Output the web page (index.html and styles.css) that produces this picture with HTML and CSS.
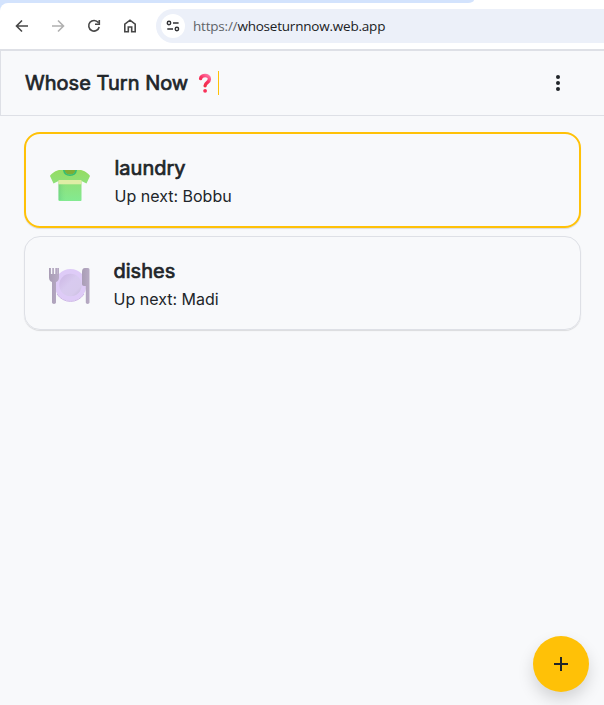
FILE: index.html
```html
<!DOCTYPE html>
<html lang="en">
<head>
<meta charset="utf-8">
<title>Whose Turn Now</title>
<link rel="stylesheet" href="styles.css">
</head>
<body>
<div class="window">
  <div class="tabstrip"><div class="tabstrip-fill"></div></div>
  <div class="toolbar">
    <svg class="nav" viewBox="0 0 16 16"><path d="M14 8H3M8 2.500 2.500 8 8 13.500"/></svg>
    <svg class="nav nav-off" viewBox="0 0 16 16"><path d="M2 8h11M8 2.500 13.500 8 8 13.500"/></svg>
    <svg class="nav" viewBox="0 0 16 16"><path d="M12.300 4.600A5.300 5.300 0 1 0 13.200 9M13.300 2v4.300H9"/></svg>
    <svg class="nav" viewBox="0 0 16 16"><path d="M2.800 13.700V6.200L8 2.200l5.200 4v7.500H9.700V9H6.300v4.700z"/></svg>
    <div class="omnibox">
      <span class="site-info"><svg viewBox="0 0 14 14"><circle cx="3" cy="4" r="1.700"/><path d="M7 4h5.600M1.300 10H7"/><circle cx="10.900" cy="10" r="1.700"/></svg></span>
      <span class="url"><span class="scheme">https://</span>whoseturnnow.web.app</span>
    </div>
  </div>
  <div class="page">
    <header class="appbar">
      <h1 class="title">Whose Turn Now</h1>
      <svg class="question" viewBox="0 0 14 20">
        <defs><linearGradient id="red" x1="1" y1="0" x2="0.400" y2="1"><stop offset="0" stop-color="#ff75a5"/><stop offset="0.550" stop-color="#f92f60"/><stop offset="1" stop-color="#ef3044"/></linearGradient></defs>
        <path d="M2.600 5.600C3 1.500 11.500 1.300 11.400 6.100c0 3.500-4.300 3.400-4.300 6.600" fill="none" stroke="url(#red)" stroke-width="3.400" stroke-linecap="round"/>
        <circle cx="7.100" cy="17.800" r="1.900" fill="#f83159"/>
      </svg>
      <span class="caret"></span>
      <svg class="more" viewBox="0 0 6 18"><circle cx="3" cy="3" r="2"/><circle cx="3" cy="9" r="2"/><circle cx="3" cy="15" r="2"/></svg>
    </header>
    <main class="list">
      <article class="card card-active">
        <svg class="emoji" viewBox="0 0 42 42">
          <defs>
            <linearGradient id="shirt" x1="0" y1="0" x2="0" y2="1"><stop offset="0" stop-color="#95dc62"/><stop offset="0.450" stop-color="#8ee17b"/><stop offset="1" stop-color="#83ea91"/></linearGradient>
            <linearGradient id="side" x1="0" y1="0" x2="1" y2="0"><stop offset="0" stop-color="#49b978" stop-opacity="0.350"/><stop offset="0.350" stop-color="#83e38c" stop-opacity="0"/></linearGradient>
          </defs>
          <path d="M14 5h14v5H14z" fill="#7fac35"/>
          <path d="M10 5h5c1 6 11 6 12 0h5c2 0 8.500 4 9 6L37.500 18.500l-5-2.500V35c0 .6-.4 1-1 1h-21c-.6 0-1-.4-1-1V16l-5 2.500L1 11C1.500 9 8 5 10 5z" fill="url(#shirt)"/>
          <path d="M9.500 19h23v16h-23z" fill="url(#side)"/>
          <path d="M9.500 15h23v4.300h-23z" fill="#dfeda5"/>
          <path d="M14.800 5c1 7 11.400 7 12.400 0" fill="none" stroke="#35bd73" stroke-width="1.700"/>
        </svg>
        <div class="text"><h2 class="name">laundry</h2><p class="next">Up next: Bobbu</p></div>
      </article>
      <article class="card">
        <svg class="emoji" viewBox="0 0 42 42">
          <defs>
            <linearGradient id="well" x1="0" y1="0" x2="1" y2="1"><stop offset="0" stop-color="#cbb5e4"/><stop offset="0.450" stop-color="#d8caef"/><stop offset="0.750" stop-color="#d7caed"/><stop offset="1" stop-color="#c2b8d4"/></linearGradient>
            <linearGradient id="steel" x1="0" y1="0" x2="1" y2="0"><stop offset="0" stop-color="#a99db5"/><stop offset="1" stop-color="#b8abc5"/></linearGradient>
          </defs>
          <circle cx="21.500" cy="20" r="16" fill="#decbf7"/>
          <path d="M8 29a16 16 0 0 0 27 0" fill="none" stroke="#cdb5e6" stroke-width="1"/>
          <circle cx="21.500" cy="20" r="11.200" fill="url(#well)"/>
          <path d="M0 3h1.900v6h1.400V3h1.600v6h1.400V3H8v6h.2V3H10v9.500c0 2.500-1.400 3.900-3 4.500v20.500c0 1.900-4 1.900-4 0V17c-1.700-.6-3-2-3-4.500z" fill="url(#steel)"/>
          <path d="M36 3h3c1 0 1.500.8 1.500 2v32.500c0 1.900-3.700 1.900-3.700 0V21H35c-1.200 0-2-1-2-2V7c0-2.500 1-4 3-4z" fill="url(#steel)"/>
        </svg>
        <div class="text"><h2 class="name">dishes</h2><p class="next">Up next: Madi</p></div>
      </article>
    </main>
    <button class="fab" aria-label="Add"><svg viewBox="0 0 14 14"><path d="M7 0v14M0 7h14"/></svg></button>
  </div>
</div>
</body>
</html>
```
FILE: styles.css
```css
* { box-sizing: border-box; }
body { margin: 0; background: #f8f9fb; color: #212529; font-family: Inter, "Liberation Sans", sans-serif; }
h1, h2, p { margin: 0; }
svg { display: block; flex: none; }
.window { height: 705px; display: flex; flex-direction: column; overflow: hidden; background: linear-gradient(#d3e3fd 0 12px, #f8f9fb 12px); }
.tabstrip { height: 3px; background: #fff; }
.tabstrip-fill { width: 474px; height: 3px; background: #d3e3fd; border-bottom-right-radius: 6px 3px; }
.toolbar { height: 46px; display: flex; align-items: center; padding-left: 14px; background: #fff; border-top-left-radius: 8px; }
.nav { width: 16px; height: 16px; margin-right: 20px; fill: none; stroke: #474747; stroke-width: 1.6; }
.nav-off { stroke: #b0b0b0; }
.omnibox { flex: 1; height: 34px; margin-left: -2px; display: flex; align-items: center; padding-left: 5px; background: #ecf0f9; border-radius: 17px 0 0 17px; }
.site-info { width: 24px; height: 24px; border-radius: 50%; background: #fff; display: flex; align-items: center; justify-content: center; }
.site-info svg { width: 14px; height: 14px; fill: none; stroke: #303134; stroke-width: 1.4; }
.url { margin-left: 8px; font: 13.5px/18px "Open Sans", "Noto Sans", sans-serif; letter-spacing: -0.21px; color: #202124; white-space: nowrap; }
.scheme { color: #5f6368; }
.page { flex: 1; min-height: 0; display: flex; flex-direction: column; border-top: 2px solid #dee0e6; background: #f8f9fb; position: relative; }
.appbar { height: 65px; display: flex; align-items: center; padding: 0 43px 0 24px; border-bottom: 1px solid #dee0e6; border-left: 1px solid #dee0e6; }
.title { width: 163px; font-size: 20px; line-height: 30px; font-weight: 400; letter-spacing: 0.02px; -webkit-text-stroke: 0.7px #212529; white-space: nowrap; }
.question { width: 14px; height: 20px; margin-left: 10px; }
.caret { flex: none; width: 1px; height: 24px; margin-left: 6px; background: #ffc107; }
.more { width: 6px; height: 18px; margin-left: auto; fill: #212529; }
.list { display: flex; flex-direction: column; gap: 8px; padding: 16px 23px 0 24px; }
.card { height: 94px; display: flex; align-items: center; padding-left: 24px; border: 1px solid #dee0e6; border-radius: 16px; box-shadow: 0 1px 1px rgba(0, 0, 0, 0.12); }
.card-active { height: 96px; border: 2px solid #ffc107; }
.emoji { width: 42px; height: 42px; margin-top: 5px; }
.card-active .emoji { margin: 11px 1px 0 -1px; }
.text { margin-left: 22.5px; padding-top: 3px; }
.name { font-size: 20px; line-height: 29px; font-weight: 400; -webkit-text-stroke: 0.7px #212529; }
.next { padding-top: 1px; font-size: 16px; line-height: 25px; }
.fab { position: absolute; right: 15px; bottom: 13px; width: 56px; height: 56px; padding: 0; border: 0; border-radius: 50%; background: #ffc107; display: flex; align-items: center; justify-content: center; box-shadow: 0 8px 16px rgba(0, 0, 0, 0.15); }
.fab svg { width: 14px; height: 14px; stroke: #212529; stroke-width: 2; }
```
